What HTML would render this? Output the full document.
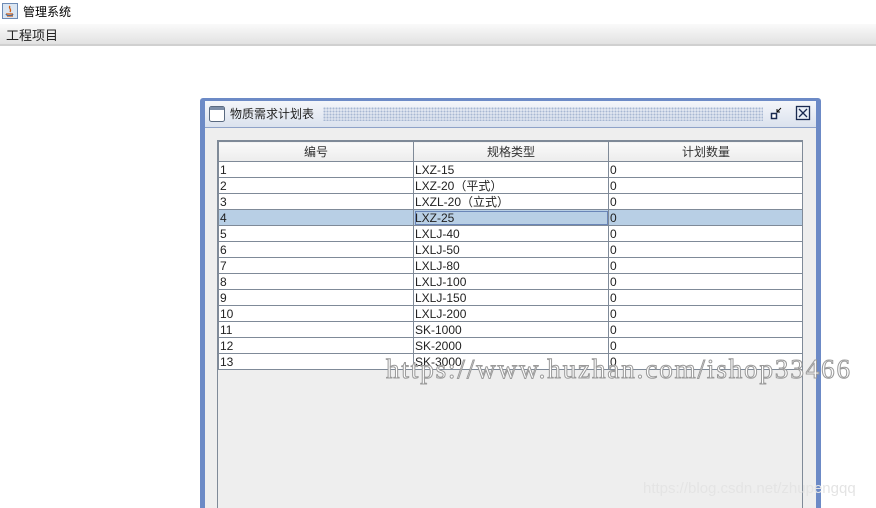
<!DOCTYPE html>
<html><head><meta charset="utf-8"><style>
*{margin:0;padding:0;box-sizing:border-box}
html,body{width:876px;height:508px;overflow:hidden}
body{background:#fff;font-family:"Liberation Sans","Noto Sans CJK SC",sans-serif;font-size:12px;color:#000;position:relative}
.abs{position:absolute}
#title{left:0;top:0;width:876px;height:24px;background:#fff}
#menu{left:0;top:24px;width:876px;height:22px;background:linear-gradient(#fafafa,#e2e2e2);border-bottom:2px solid #d0d0d0}
#frame{left:200px;top:98px;width:621px;height:410px;background:#6c8ac6;border-radius:3px 3px 0 0;overflow:hidden}
#inner{left:5px;top:3px;width:611px;height:407px;background:#eeeeee;overflow:hidden}
#tbar{left:0;top:0;width:611px;height:27px;background:linear-gradient(#f4f6fa,#dbe2ee);border-bottom:1px solid #8ea2c8}
#dots{left:118px;top:6px;width:440px;height:14px;background-image:radial-gradient(#a7b7d2 1px,transparent 1.2px);background-size:3px 3px}
#tbl{left:12px;top:39px;width:586px;height:370px;border:1px solid #7f8a98;border-bottom:none;background:#eeeeee;overflow:hidden}
table{border-collapse:collapse;width:585px;table-layout:fixed}
td,th{border:1px solid #7f8a98;font-weight:normal;padding:0 1px;line-height:14px;white-space:nowrap;overflow:hidden}
th{height:20px;background:linear-gradient(#fafafa,#ececec);text-align:center;font-family:"Noto Sans CJK SC",sans-serif;font-size:12px;color:#333}
td{height:16px;background:#fff;font-size:12px;color:#222}
tr.sel td{background:#b8cfe5}
tr.sel td.f{outline:1px solid #6a86b8;outline-offset:-2px}
.wm{left:386px;top:354px;font-family:"Liberation Serif",serif;font-size:27px;color:#fff;-webkit-text-stroke:1px #9a9a9a;letter-spacing:1.9px;white-space:nowrap}
.wm2{left:643px;top:480px;font-size:15px;color:#e4e4e4;white-space:nowrap}
</style></head><body>
<div id="title" class="abs">
 <svg class="abs" style="left:2px;top:3px" width="16" height="16"><rect x="0.5" y="0.5" width="15" height="15" fill="#dbe6f2" stroke="#6d8bb5"/><path d="M8 3c-2 2 2 3 0 6M4 11h7M5 13h6" stroke="#d05a10" stroke-width="1.3" fill="none"/><path d="M4 11c0 2 7 2 7 0" stroke="#3a6ea8" fill="none"/></svg>
 <div class="abs" style="left:23px;top:4px;font-size:12px;font-family:'Noto Sans CJK SC',sans-serif;line-height:16px">管理系统</div>
</div>
<div id="menu" class="abs"><div class="abs" style="left:6px;top:2px;font-size:13px;font-family:'Noto Sans CJK SC',sans-serif;line-height:18px;color:#222">工程项目</div></div>
<div id="frame" class="abs">
 <div id="inner" class="abs">
  <div id="tbar" class="abs">
   <svg class="abs" style="left:4px;top:5px" width="16" height="16"><rect x="0.5" y="0.5" width="15" height="15" rx="2" fill="#fff" stroke="#5a6a80"/><rect x="1" y="1" width="14" height="3" fill="#7d8ea8"/></svg>
   <div class="abs" style="left:25px;top:5px;font-size:12px;font-family:'Noto Sans CJK SC',sans-serif;line-height:16px;color:#222">物质需求计划表</div>
   <div id="dots" class="abs"></div>
   <svg class="abs" style="left:565px;top:4px" width="16" height="16"><rect x="1.5" y="8.5" width="5" height="5" fill="#fff" stroke="#1a2a50" stroke-width="1.5"/><path d="M11 3L7 7M7 4v3h3" stroke="#000" fill="none"/></svg>
   <svg class="abs" style="left:590px;top:4px" width="16" height="16"><rect x="1.5" y="1.5" width="13" height="13" fill="#e8eef6" stroke="#1a2a50" stroke-width="1.3"/><path d="M4 4l8 8M12 4l-8 8" stroke="#1a2a50" stroke-width="1.3"/></svg>
  </div>
  <div id="tbl" class="abs">
   <table>
    <colgroup><col style="width:195px"><col style="width:195px"><col style="width:195px"></colgroup>
    <tr><th>编号</th><th>规格类型</th><th>计划数量</th></tr>
    <tr><td>1</td><td>LXZ-15</td><td>0</td></tr>
    <tr><td>2</td><td>LXZ-20（平式）</td><td>0</td></tr>
    <tr><td>3</td><td>LXZL-20（立式）</td><td>0</td></tr>
    <tr class="sel"><td>4</td><td class="f">LXZ-25</td><td>0</td></tr>
    <tr><td>5</td><td>LXLJ-40</td><td>0</td></tr>
    <tr><td>6</td><td>LXLJ-50</td><td>0</td></tr>
    <tr><td>7</td><td>LXLJ-80</td><td>0</td></tr>
    <tr><td>8</td><td>LXLJ-100</td><td>0</td></tr>
    <tr><td>9</td><td>LXLJ-150</td><td>0</td></tr>
    <tr><td>10</td><td>LXLJ-200</td><td>0</td></tr>
    <tr><td>11</td><td>SK-1000</td><td>0</td></tr>
    <tr><td>12</td><td>SK-2000</td><td>0</td></tr>
    <tr><td>13</td><td>SK-3000</td><td>0</td></tr>
   </table>
  </div>
 </div>
</div>
<div class="abs wm">https://www.huzhan.com/ishop33466</div>
<div class="abs wm2">https://blog.csdn.net/zhupengqq</div>
</body></html>
